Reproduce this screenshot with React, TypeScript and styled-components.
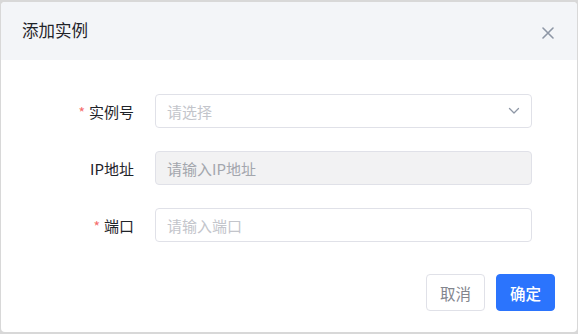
import React from "react";
import styled, { createGlobalStyle } from "styled-components";

const Global = createGlobalStyle`
  html, body { margin: 0; padding: 0; background: #d8d8d8; }
  body { font-family: "Noto Sans CJK SC", "Noto Sans", sans-serif; }
  * { box-sizing: border-box; }
`;

const Page = styled.div`
  width: 578px;
  height: 334px;
  padding: 2px 1px 2px 1px;
  display: flex;
`;

const Dialog = styled.div`
  flex: 1;
  background: #fff;
  border-radius: 4px;
  overflow: hidden;
  display: flex;
  flex-direction: column;
`;

const Header = styled.div`
  height: 58px;
  background: #f3f5f8;
  display: flex;
  align-items: center;
  justify-content: space-between;
  padding: 0 22px 0 21px;
`;

const Title = styled.div`
  font-size: 16.5px;
  color: #1f2329;
  line-height: 1;
  margin-top: -2px;
`;

const Close = styled.button`
  border: none;
  background: none;
  padding: 0;
  width: 14px;
  height: 14px;
  display: flex;
  align-items: center;
  justify-content: center;
  margin-top: 4px;
  cursor: pointer;
`;

const Form = styled.div`
  display: flex;
  flex-direction: column;
  gap: 23px;
  padding: 34px 0 0 0;
`;

const Row = styled.div`
  display: grid;
  grid-template-columns: 133px 377px;
  column-gap: 21px;
  align-items: center;
`;

const Label = styled.label`
  text-align: right;
  font-size: 15px;
  color: #1f2329;
`;

const Star = styled.span`
  color: #f56c6c;
  margin-right: 4px;
  font-size: 14px;
`;

const Field = styled.div<{ $disabled?: boolean }>`
  height: 34px;
  border: 1px solid #e0e1e8;
  border-radius: 4px;
  background: ${(p) => (p.$disabled ? "#f2f2f3" : "#fff")};
  display: flex;
  align-items: center;
  justify-content: space-between;
  padding: 0 11px 0 11px;
  font-size: 15px;
  color: ${(p) => (p.$disabled ? "#a3a6ad" : "#c3c5cb")};
`;

const Footer = styled.div`
  display: flex;
  justify-content: flex-end;
  gap: 11px;
  padding: 32px 22px 0 0;
`;

const Button = styled.button<{ $primary?: boolean }>`
  width: 59px;
  height: 37px;
  border-radius: 4px;
  font-family: inherit;
  font-size: 15.5px;
  border: 1px solid ${(p) => (p.$primary ? "#2b74fd" : "#e0e1e8")};
  background: ${(p) => (p.$primary ? "#2b74fd" : "#fff")};
  color: ${(p) => (p.$primary ? "#fff" : "#83868e")};
  font-weight: ${(p) => (p.$primary ? 500 : 400)};
`;

export default function App() {
  return (
    <Page>
      <Global />
      <Dialog>
        <Header>
          <Title>添加实例</Title>
          <Close aria-label="关闭">
            <svg width="12" height="12" viewBox="0 0 12 12">
              <path d="M1 1L11 11M11 1L1 11" stroke="#8e97a6" strokeWidth="1.6" strokeLinecap="round" />
            </svg>
          </Close>
        </Header>
        <Form>
          <Row>
            <Label><Star>*</Star>实例号</Label>
            <Field>
              <span>请选择</span>
              <svg width="12" height="8" viewBox="0 0 12 8">
                <path d="M1.5 1.5L6 6L10.5 1.5" stroke="#8e97a6" strokeWidth="1.3" fill="none" strokeLinecap="round" strokeLinejoin="round" />
              </svg>
            </Field>
          </Row>
          <Row>
            <Label>IP地址</Label>
            <Field $disabled>请输入IP地址</Field>
          </Row>
          <Row>
            <Label><Star>*</Star>端口</Label>
            <Field>请输入端口</Field>
          </Row>
        </Form>
        <Footer>
          <Button>取消</Button>
          <Button $primary>确定</Button>
        </Footer>
      </Dialog>
    </Page>
  );
}
